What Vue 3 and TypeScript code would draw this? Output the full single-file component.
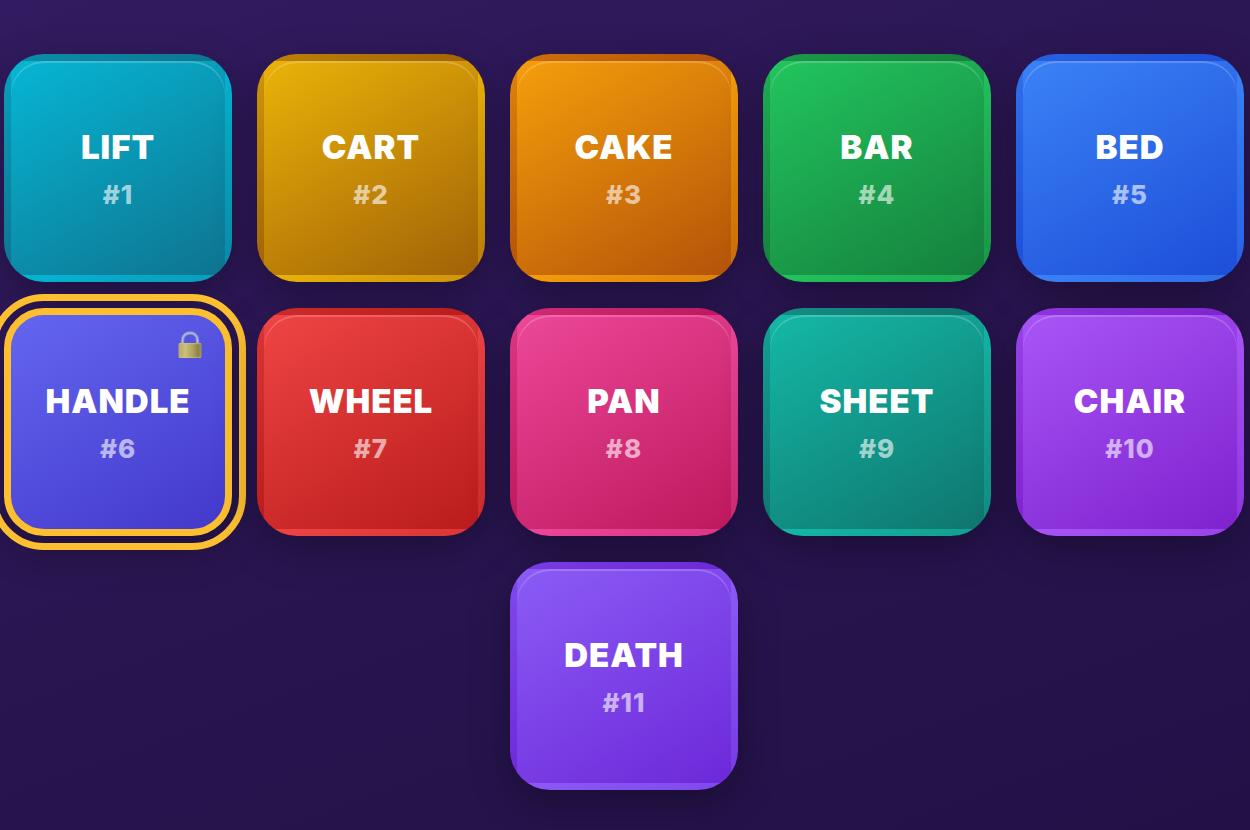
<script setup lang="ts">
import { ref } from 'vue'

interface Tile {
  word: string
  tone: string
}

const tiles: Tile[] = [
  { word: 'LIFT', tone: 'cyan' },
  { word: 'CART', tone: 'yellow' },
  { word: 'CAKE', tone: 'orange' },
  { word: 'BAR', tone: 'green' },
  { word: 'BED', tone: 'blue' },
  { word: 'HANDLE', tone: 'indigo' },
  { word: 'WHEEL', tone: 'red' },
  { word: 'PAN', tone: 'pink' },
  { word: 'SHEET', tone: 'teal' },
  { word: 'CHAIR', tone: 'purple' },
  { word: 'DEATH', tone: 'violet' },
]

const locked = ref(5)
</script>

<template>
  <main class="board">
    <button
      v-for="(tile, index) in tiles"
      :key="tile.word"
      type="button"
      class="tile"
      :class="[tile.tone, { locked: index === locked }]"
      :aria-pressed="index === locked"
      @click="locked = index"
    >
      <span class="word">{{ tile.word }}</span>
      <span class="number">#{{ index + 1 }}</span>
      <svg v-if="index === locked" class="lock" viewBox="0 0 26 28" aria-hidden="true">
        <defs>
          <linearGradient id="brass" x1="0" x2="1" y1="0" y2="0">
            <stop offset="0" stop-color="#b5aa68" />
            <stop offset="0.3" stop-color="#cbc07c" />
            <stop offset="0.65" stop-color="#aa9e58" />
            <stop offset="0.85" stop-color="#8c8148" />
            <stop offset="1" stop-color="#a0955c" />
          </linearGradient>
        </defs>
        <path d="M5.5 13V9.5C5.5 4.8 8.7 2 13 2s7.5 2.8 7.5 7.5V13" fill="none" stroke="#8589cd" stroke-width="3.4" />
        <path d="M5.5 13V9.5C5.5 4.8 8.7 2 13 2s7.5 2.8 7.5 7.5V13" fill="none" stroke="#b3b8e0" stroke-width="1.6" />
        <rect x="1.5" y="12" width="23" height="15" rx="1.5" fill="url(#brass)" />
        <path d="M2 12.7h22M2 26.3h22" stroke="#d3c987" stroke-width="1" opacity=".6" />
      </svg>
    </button>
  </main>
</template>

<style>
body {
  margin: 0;
  background: #24124a;
}
</style>

<style scoped>
.board {
  box-sizing: border-box;
  min-height: 100vh;
  display: flex;
  flex-wrap: wrap;
  justify-content: center;
  align-content: flex-start;
  gap: 26px 25px;
  padding: 54px 6px 40px 4px;
  background: linear-gradient(160deg, #321b60 0%, #2a1652 45%, #221147 100%);
  font-family: Inter, "Liberation Sans", sans-serif;
  font-optical-sizing: none;
}

.tile {
  position: relative;
  box-sizing: border-box;
  width: 228px;
  height: 228px;
  padding: 2px 0 0;
  display: flex;
  flex-direction: column;
  align-items: center;
  justify-content: center;
  gap: 12px;
  border: 7px solid transparent;
  border-radius: 40px;
  background-image: linear-gradient(150deg, var(--from), var(--to));
  box-shadow: 0 13px 40px rgba(0, 0, 0, 0.3), inset 0 2px 0 rgba(255, 255, 255, 0.2);
  color: #fff;
  font-family: inherit;
  font-optical-sizing: inherit;
  cursor: pointer;
}

.word {
  font-size: 33px;
  line-height: 40px;
  font-weight: 900;
  letter-spacing: 1px;
}

.number {
  font-size: 26px;
  line-height: 32px;
  font-weight: 800;
  letter-spacing: 1px;
  opacity: 0.6;
}

.locked {
  border-color: #fbbf30;
  outline: 7px solid #fbbf30;
  outline-offset: 7px;
  box-shadow: 0 13px 40px rgba(0, 0, 0, 0.3);
}

.lock {
  position: absolute;
  top: 16px;
  right: 22px;
  width: 26px;
  height: 28px;
}

.cyan { --from: #06b6d4; --to: #0e7490; }
.yellow { --from: #eab308; --to: #a16207; }
.orange { --from: #f59e0b; --to: #b45309; }
.green { --from: #22c55e; --to: #15803d; }
.blue { --from: #3b82f6; --to: #1d4ed8; }
.indigo { --from: #6366f1; --to: #4338ca; }
.red { --from: #ef4444; --to: #b91c1c; }
.pink { --from: #ec4899; --to: #be185d; }
.teal { --from: #14b8a6; --to: #0f766e; }
.purple { --from: #a855f7; --to: #7e22ce; }
.violet { --from: #8b5cf6; --to: #6d28d9; }
</style>
